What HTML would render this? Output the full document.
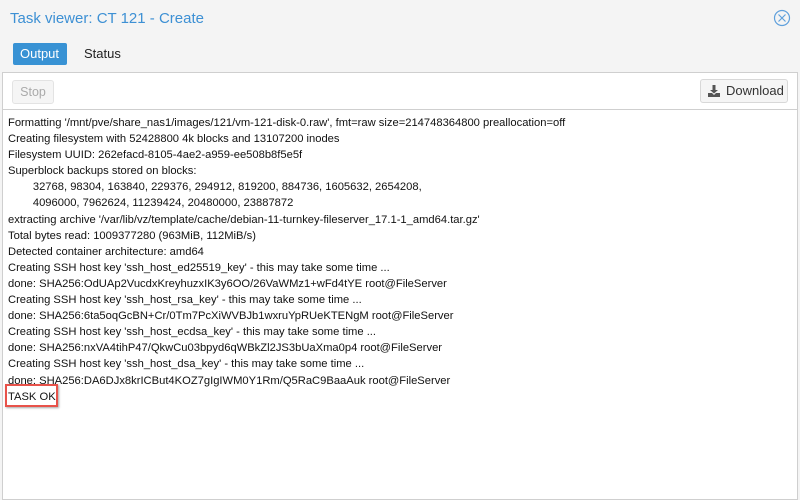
<!DOCTYPE html>
<html><head><meta charset="utf-8"><style>
html,body{margin:0;padding:0;width:800px;height:500px;background:#f4f4f4;overflow:hidden;font-family:"Liberation Sans",sans-serif;}
.title{position:absolute;left:10px;top:10px;font-size:15px;color:#3d90d4;}
.close{position:absolute;left:773px;top:9px;}
.tab{position:absolute;top:43px;height:22px;line-height:22px;font-size:13px;padding:0 7px;}
.t1{left:13px;background:#3892d4;color:#fff;border-radius:2px;width:40px;}
.t2{left:77px;color:#222;}
.panel{position:absolute;left:2px;top:72px;width:794px;height:426px;background:#fff;border:1px solid #cfcfcf;}
.tb{position:absolute;left:0;top:0;width:794px;height:36px;border-bottom:1px solid #cfcfcf;}
.stop{position:absolute;left:9px;top:7px;width:40px;height:22px;border:1px solid #e3e3e3;border-radius:3px;background:#f5f5f5;color:#aaa;font-size:12.5px;text-align:center;line-height:22px;}
.dl{position:absolute;left:697px;top:6px;width:86px;height:22px;border:1px solid #d8d8d8;border-radius:3px;background:#f5f5f5;color:#333;font-size:13px;line-height:22px;}
.dl span{position:absolute;left:25px;}
.log{position:absolute;left:5px;top:42px;font-size:11.2px;line-height:16.1px;color:#111;white-space:pre;}
.ok{position:absolute;left:2px;top:311px;width:49px;height:19px;border:2px solid #e8524a;box-shadow:1px 1px 2px rgba(0,0,0,.35);}
</style></head><body>
<div class="title">Task viewer: CT 121 - Create</div>
<svg class="close" width="18" height="18" viewBox="0 0 18 18"><circle cx="9" cy="9" r="7.5" fill="none" stroke="#5fa0dc" stroke-width="1.2"/><path d="M5.5 5.5L12.5 12.5M12.5 5.5L5.5 12.5" stroke="#5fa0dc" stroke-width="1.2"/></svg>
<div class="tab t1">Output</div>
<div class="tab t2">Status</div>
<div class="panel">
<div class="tb">
<div class="stop">Stop</div>
<div class="dl"><svg style="position:absolute;left:6px;top:4px" width="14" height="14" viewBox="0 0 14 14"><path d="M5.5 1h3v5h2.5L7 9.5 3 6h2.5z" fill="#555"/><path d="M1 9h4l2 2 2-2h4v4H1z" fill="#555"/></svg><span>Download</span></div>
</div>
<div class="log">Formatting '/mnt/pve/share_nas1/images/121/vm-121-disk-0.raw', fmt=raw size=214748364800 preallocation=off
Creating filesystem with 52428800 4k blocks and 13107200 inodes
Filesystem UUID: 262efacd-8105-4ae2-a959-ee508b8f5e5f
Superblock backups stored on blocks:
        32768, 98304, 163840, 229376, 294912, 819200, 884736, 1605632, 2654208,
        4096000, 7962624, 11239424, 20480000, 23887872
extracting archive '/var/lib/vz/template/cache/debian-11-turnkey-fileserver_17.1-1_amd64.tar.gz'
Total bytes read: 1009377280 (963MiB, 112MiB/s)
Detected container architecture: amd64
Creating SSH host key 'ssh_host_ed25519_key' - this may take some time ...
done: SHA256:OdUAp2VucdxKreyhuzxIK3y6OO/26VaWMz1+wFd4tYE root@FileServer
Creating SSH host key 'ssh_host_rsa_key' - this may take some time ...
done: SHA256:6ta5oqGcBN+Cr/0Tm7PcXiWVBJb1wxruYpRUeKTENgM root@FileServer
Creating SSH host key 'ssh_host_ecdsa_key' - this may take some time ...
done: SHA256:nxVA4tihP47/QkwCu03bpyd6qWBkZl2JS3bUaXma0p4 root@FileServer
Creating SSH host key 'ssh_host_dsa_key' - this may take some time ...
done: SHA256:DA6DJx8krICBut4KOZ7gIgIWM0Y1Rm/Q5RaC9BaaAuk root@FileServer
TASK OK</div>
<div class="ok"></div>
</div>
</body></html>
